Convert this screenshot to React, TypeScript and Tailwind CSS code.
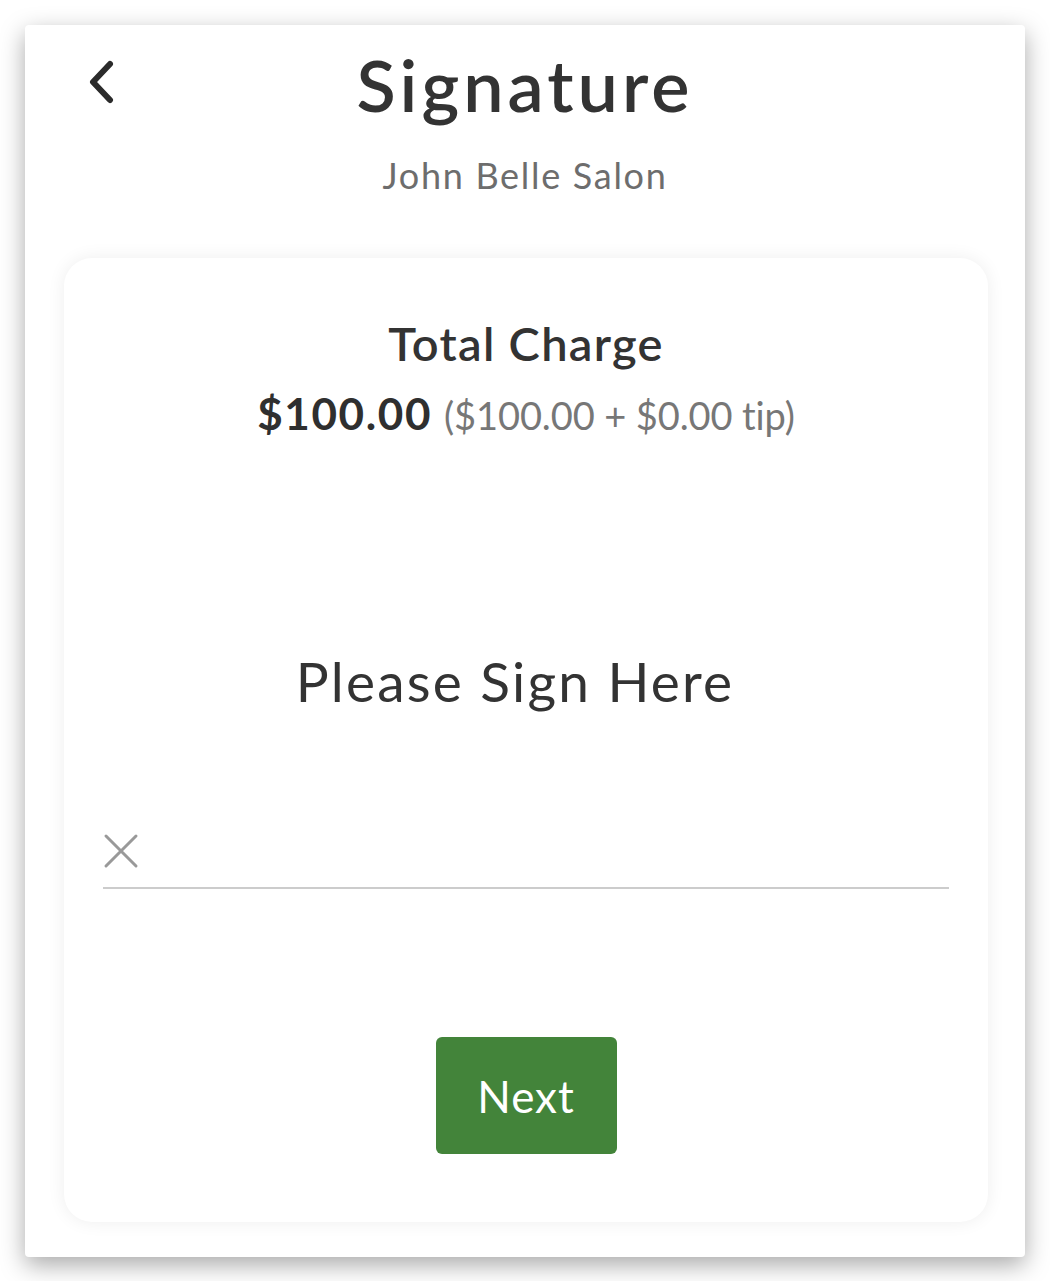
import React from "react";

export default function App() {
  return (
    <div className="min-h-[1281px] bg-white pt-[25px] px-[25px] font-['Lato',sans-serif]">
      <div className="w-[1000px] rounded-[4px] bg-white shadow-[0_8px_24px_rgba(0,0,0,0.34)] pb-[35px]">
        <div className="relative flex flex-col items-center pt-[23px]">
          <button className="absolute left-[57px] top-[35px] w-[34px] h-[44px] flex items-center justify-center">
            <svg width="30" height="44" viewBox="0 0 30 44" fill="none">
              <path
                d="M26 4 L9 22 L26 40"
                stroke="#2b2b2b"
                strokeWidth="6"
                strokeLinecap="round"
                strokeLinejoin="round"
              />
            </svg>
          </button>
          <h1 className="text-[72px] leading-none font-semibold text-[#333333] tracking-[4px]">
            Signature
          </h1>
          <p className="mt-[37px] text-[36px] leading-none text-[#6d6d6d] tracking-[1.7px]">
            John Belle Salon
          </p>
        </div>

        <div className="mt-[65px] ml-[39px] mr-[37px] rounded-[28px] bg-white shadow-[0_0_18px_rgba(0,0,0,0.07)] pt-[62px] pb-[68px] px-[39px] flex flex-col items-center">
          <h2 className="text-[47px] leading-none font-semibold text-[#333333] tracking-[1.3px]">
            Total Charge
          </h2>
          <div className="mt-[24px] flex items-baseline gap-[12px]">
            <span className="text-[44px] leading-none font-bold text-[#2f2f2f] tracking-[1.6px]">$100.00</span>
            <span className="text-[38px] leading-none text-[#777777] tracking-[-0.1px]">($100.00 + $0.00 tip)</span>
          </div>

          <p className="mt-[219px] mr-[22px] text-[55px] leading-none text-[#333333] tracking-[2.2px]">
            Please Sign Here
          </p>

          <div className="mt-[124px] w-full border-b-2 border-[#cccccc] pb-[18px]">
            <svg width="36" height="36" viewBox="0 0 36 36" fill="none">
              <path
                d="M3 3 L33 33 M33 3 L3 33"
                stroke="#999999"
                strokeWidth="3"
                strokeLinecap="round"
              />
            </svg>
          </div>

          <button className="mt-[148px] w-[181px] h-[117px] rounded-[6px] bg-[#43843a] text-white text-[44px] leading-none tracking-[1px]">
            Next
          </button>
        </div>
      </div>
    </div>
  );
}
